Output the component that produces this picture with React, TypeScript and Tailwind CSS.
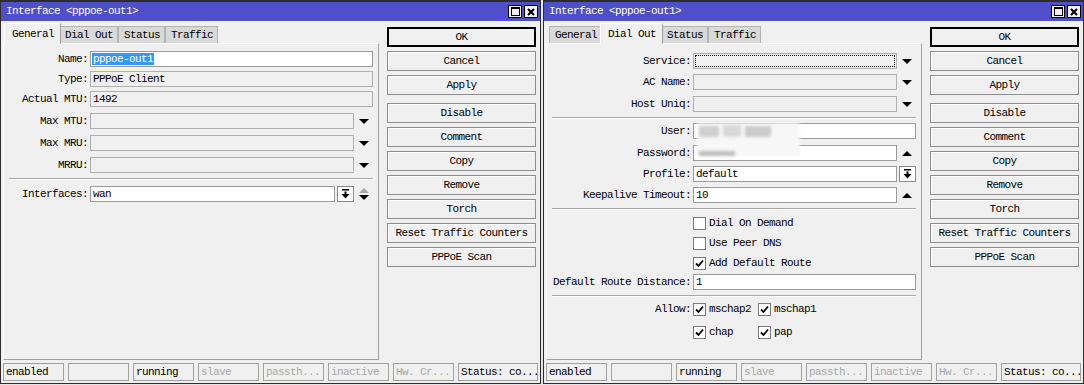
import type { ReactNode } from "react";

const TEXT =
  "font-['Liberation_Mono',monospace] text-[11px] tracking-[-0.6px] leading-none text-black whitespace-nowrap";

function Tri({ up = false, color = "#000" }: { up?: boolean; color?: string }) {
  return (
    <svg width="10" height="5" viewBox="0 0 10 5">
      <polygon points={up ? "0,5 10,5 5,0" : "0,0 10,0 5,5"} fill={color} />
    </svg>
  );
}

function Trailing({ children }: { children?: ReactNode }) {
  return <div className="flex w-[19px] shrink-0 flex-col items-center justify-center gap-[2px]">{children}</div>;
}

function PickBtn() {
  return (
    <div className="ml-[2px] flex h-full w-[17px] shrink-0 items-center justify-center border border-[#8a8a8a] bg-white">
      <svg width="9" height="10" viewBox="0 0 9 10">
        <rect x="1" y="0" width="7" height="1.5" fill="#000" />
        <rect x="3.5" y="2.5" width="2" height="3" fill="#000" />
        <polygon points="0.5,5 8.5,5 4.5,9.5" fill="#000" />
      </svg>
    </div>
  );
}

function Row({ mt, labelW, label, children }: { mt: string; labelW: string; label?: string; children: ReactNode }) {
  return (
    <div className={`flex h-[16px] items-center pr-[5px] ${mt}`}>
      <div className={`${labelW} shrink-0 pr-[2px] text-right`}>{label}</div>
      {children}
    </div>
  );
}

function Input({ white = false, children }: { white?: boolean; children?: ReactNode }) {
  return (
    <div
      className={`flex h-full min-w-0 flex-1 items-center border pl-[2px] ${
        white ? "border-[#9a9a9a] bg-white" : "border-[#b0b0b0] bg-[#f0f0f0]"
      }`}
    >
      {children}
    </div>
  );
}

function Sep({ mt }: { mt: string }) {
  return <div className={`mx-[5px] h-[2px] border-y border-t-[#a8a8a8] border-b-white ${mt}`} />;
}

function Check({ on = false }: { on?: boolean }) {
  return (
    <div className="flex h-[13px] w-[13px] shrink-0 items-center justify-center border border-[#7a7a7a] bg-white">
      {on && (
        <svg width="9" height="9" viewBox="0 0 9 9">
          <path d="M1 4.5 L3.5 7 L8 1.5" fill="none" stroke="#000" strokeWidth="1.8" />
        </svg>
      )}
    </div>
  );
}

function CheckItem({ on, label, fixed = false }: { on?: boolean; label: string; fixed?: boolean }) {
  return (
    <div className={`flex items-center gap-[3px] ${fixed ? "w-[65px]" : ""}`}>
      <Check on={on} />
      <span>{label}</span>
    </div>
  );
}

const buttons = ["OK", "Cancel", "Apply", "Disable", "Comment", "Copy", "Remove", "Torch", "Reset Traffic Counters", "PPPoE Scan"];

const status = [
  { t: "enabled", on: true },
  { t: "", on: true },
  { t: "running", on: true },
  { t: "slave", on: false },
  { t: "passth...", on: false },
  { t: "inactive", on: false },
  { t: "Hw. Cr...", on: false },
  { t: "Status: co...", on: true },
];

const tabs = ["General", "Dial Out", "Status", "Traffic"];

function Window({ active, children }: { active: string; children: ReactNode }) {
  return (
    <div className="flex h-[384px] w-[541px] shrink-0 flex-col border border-t-2 border-[#2d2d2d] bg-[#f0f0f0]">
      {/* title bar */}
      <div className="flex h-[19px] items-center justify-between bg-[#4f50c9] pl-[5px] pr-[2px]">
        <span className="text-white">Interface &lt;pppoe-out1&gt;</span>
        <div className="flex gap-[2px]">
          <div className="flex h-[13px] w-[14px] items-center justify-center border border-black bg-[#f0f0f0]">
            <svg width="9" height="9" viewBox="0 0 9 9">
              <rect x="0.5" y="0.5" width="8" height="8" fill="none" stroke="#000" />
              <rect x="0" y="0" width="9" height="2" fill="#000" />
            </svg>
          </div>
          <div className="flex h-[13px] w-[14px] items-center justify-center border border-black bg-[#f0f0f0]">
            <svg width="8" height="8" viewBox="0 0 8 8">
              <path d="M1 1 L7 7 M7 1 L1 7" stroke="#000" strokeWidth="2" />
            </svg>
          </div>
        </div>
      </div>

      <div className="flex flex-1 flex-col pl-[2px] pr-[1px]">
        <div className="flex h-[339px]">
          <div className="flex w-[376px] flex-col">
            {/* tabs */}
            <div className="mt-[2px] flex h-[20px] items-end pl-[3px]">
              {tabs.map((t) =>
                t === active ? (
                  <div
                    key={t}
                    className="relative z-10 -mx-[2px] -mb-[1px] flex h-[21px] items-center border-l border-r border-t border-l-white border-r-[#a0a0a0] border-t-white bg-[#f0f0f0] pl-[7px] pr-[6px]"
                  >
                    {t}
                  </div>
                ) : (
                  <div
                    key={t}
                    className="flex h-[17px] items-center border-l border-r border-t border-[#b4b4b4] bg-[#d9d9d9] pl-[5px] pr-[4px]"
                  >
                    {t}
                  </div>
                )
              )}
            </div>
            {/* tab page */}
            <div className="relative flex flex-1 flex-col border border-b-[#a0a0a0] border-l-white border-r-[#a0a0a0] border-t-white">
              {children}
            </div>
          </div>

          {/* buttons */}
          <div className="ml-[8px] mt-[6px] flex w-[149px] flex-col gap-[4px]">
            {buttons.map((b) => (
              <div
                key={b}
                className={`flex h-[20px] shrink-0 items-center justify-center bg-[#f0f0f0] ${
                  b === "OK" ? "border-2 border-black" : "border border-[#8d8d8d] shadow-[inset_1px_1px_0_#fff]"
                } ${b === "Disable" ? "mt-[4px]" : ""}`}
              >
                {b}
              </div>
            ))}
          </div>
        </div>

        {/* status bar */}
        <div className="mt-[3px] flex h-[18px] gap-[4px]">
          {status.map((s, i) => (
            <div
              key={i}
              className={`flex h-full items-center overflow-hidden border border-[#a0a0a0] pl-[2px] ${
                i === 7 ? "w-[80px]" : "w-[61px]"
              } ${s.on ? "text-black" : "text-[#a8a8a8]"}`}
            >
              {s.t}
            </div>
          ))}
        </div>
      </div>
    </div>
  );
}

function GeneralTab() {
  const L = "w-[86px]";
  return (
    <>
      <Row mt="mt-[7px]" labelW={L} label="Name:">
        <Input white>
          <span className="-ml-[1px] flex h-[12px] items-center bg-[#3399ff] px-[1px] text-white">pppoe-out1</span>
        </Input>
      </Row>
      <Row mt="mt-[4px]" labelW={L} label="Type:">
        <Input>PPPoE Client</Input>
      </Row>
      <Row mt="mt-[4px]" labelW={L} label="Actual MTU:">
        <Input>1492</Input>
      </Row>
      <Row mt="mt-[6px]" labelW={L} label="Max MTU:">
        <Input />
        <Trailing>
          <Tri />
        </Trailing>
      </Row>
      <Row mt="mt-[6px]" labelW={L} label="Max MRU:">
        <Input />
        <Trailing>
          <Tri />
        </Trailing>
      </Row>
      <Row mt="mt-[6px]" labelW={L} label="MRRU:">
        <Input />
        <Trailing>
          <Tri />
        </Trailing>
      </Row>
      <Sep mt="mt-[5px]" />
      <Row mt="mt-[6px]" labelW={L} label="Interfaces:">
        <Input white>wan</Input>
        <PickBtn />
        <Trailing>
          <Tri up color="#a8a8a8" />
          <Tri />
        </Trailing>
      </Row>
    </>
  );
}

function DialOutTab() {
  const L = "w-[146px]";
  return (
    <>
      <Row mt="mt-[9px]" labelW={L} label="Service:">
        <div className="flex h-full min-w-0 flex-1 border border-[#b0b0b0] bg-[#f0f0f0] p-[1px]">
          <div className="flex-1 border border-dotted border-black" />
        </div>
        <Trailing>
          <Tri />
        </Trailing>
      </Row>
      <Row mt="mt-[5px]" labelW={L} label="AC Name:">
        <Input />
        <Trailing>
          <Tri />
        </Trailing>
      </Row>
      <Row mt="mt-[6px]" labelW={L} label="Host Uniq:">
        <Input />
        <Trailing>
          <Tri />
        </Trailing>
      </Row>
      <Sep mt="mt-[5px]" />
      <Row mt="mt-[4px]" labelW={L} label="User:">
        <Input white />
      </Row>
      <Row mt="mt-[6px]" labelW={L} label="Password:">
        <Input white />
        <Trailing>
          <Tri up />
        </Trailing>
      </Row>
      <Row mt="mt-[5px]" labelW={L} label="Profile:">
        <Input white>default</Input>
        <PickBtn />
      </Row>
      <Row mt="mt-[5px]" labelW={L} label="Keepalive Timeout:">
        <Input white>10</Input>
        <Trailing>
          <Tri up />
        </Trailing>
      </Row>
      <Sep mt="mt-[5px]" />
      <Row mt="mt-[5px]" labelW={L}>
        <CheckItem label="Dial On Demand" />
      </Row>
      <Row mt="mt-[4px]" labelW={L}>
        <CheckItem label="Use Peer DNS" />
      </Row>
      <Row mt="mt-[4px]" labelW={L}>
        <CheckItem on label="Add Default Route" />
      </Row>
      <Row mt="mt-[3px]" labelW={L} label="Default Route Distance:">
        <Input white>1</Input>
      </Row>
      <Sep mt="mt-[5px]" />
      <Row mt="mt-[4px]" labelW={L} label="Allow:">
        <CheckItem on fixed label="mschap2" />
        <CheckItem on fixed label="mschap1" />
      </Row>
      <Row mt="mt-[7px]" labelW={L}>
        <CheckItem on fixed label="chap" />
        <CheckItem on fixed label="pap" />
      </Row>

      {/* blurred credentials */}
      <div className="absolute left-[150px] top-[79px] h-[33px] w-[103px] bg-[#f7f7f7] blur-[1.5px]">
        <div className="absolute left-[2px] top-[3px] h-[11px] w-[20px] bg-[#cfcfcf]" />
        <div className="absolute left-[26px] top-[2px] h-[12px] w-[18px] bg-[#d8d8d8]" />
        <div className="absolute left-[48px] top-[3px] h-[11px] w-[26px] bg-[#cbcbcb]" />
        <div className="absolute left-[2px] top-[28px] h-[5px] w-[36px] bg-[#bdbdbd]" />
      </div>
    </>
  );
}

export default function App() {
  return (
    <div className={`${TEXT} flex h-[385px] w-[1084px] gap-[2px] overflow-hidden bg-[#e6e6e6]`}>
      <Window active="General">
        <GeneralTab />
      </Window>
      <Window active="Dial Out">
        <DialOutTab />
      </Window>
    </div>
  );
}
